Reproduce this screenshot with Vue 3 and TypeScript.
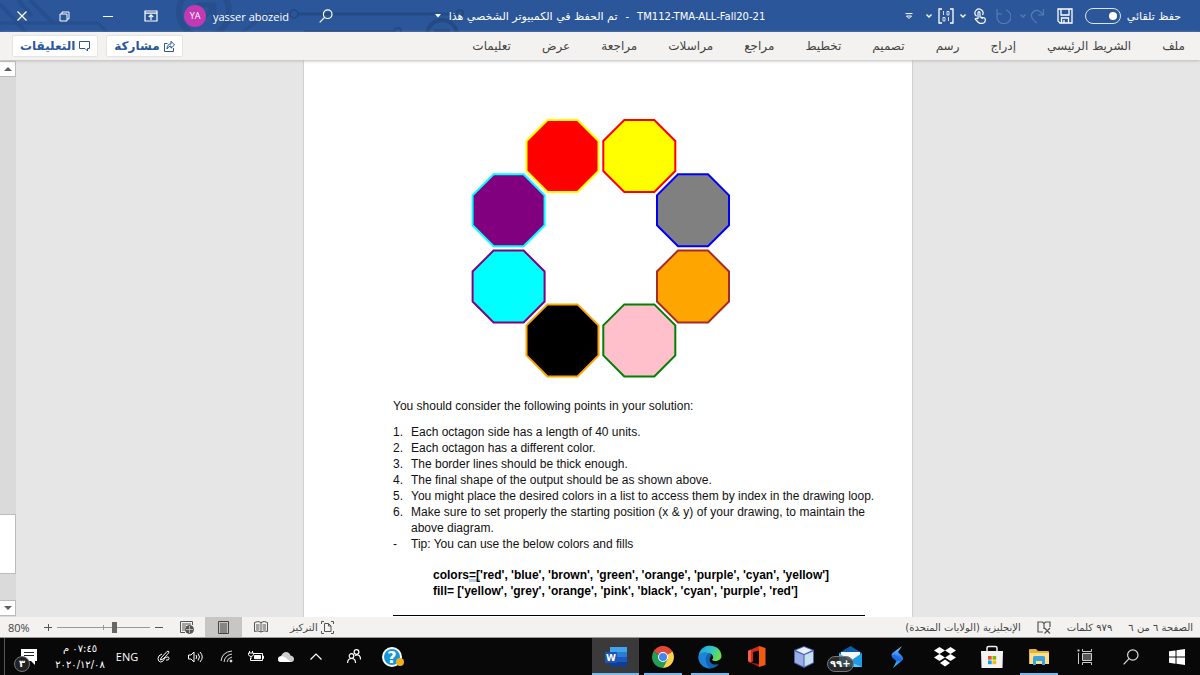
<script setup lang="ts">
import { ref } from 'vue'

interface Octagon {
  cx: number
  cy: number
  stroke: string
  fill: string
}

const tabs: string[] = [
  'ملف', 'الشريط الرئيسي', 'إدراج', 'رسم', 'تصميم', 'تخطيط',
  'مراجع', 'مراسلات', 'مراجعة', 'عرض', 'تعليمات',
]

const octagons: Octagon[] = [
  { cx: 168.3, cy: 38, stroke: 'red', fill: 'yellow' },
  { cx: 222, cy: 92.3, stroke: 'blue', fill: 'grey' },
  { cx: 222, cy: 168.5, stroke: 'brown', fill: 'orange' },
  { cx: 168.3, cy: 222.4, stroke: 'green', fill: 'pink' },
  { cx: 91.5, cy: 222.4, stroke: 'orange', fill: 'black' },
  { cx: 37.6, cy: 168.5, stroke: 'purple', fill: 'cyan' },
  { cx: 37.6, cy: 92.3, stroke: 'cyan', fill: 'purple' },
  { cx: 91.5, cy: 38, stroke: 'yellow', fill: 'red' },
]

function outline(o: Octagon): string {
  const r = 36
  const s = 15
  return [[-s, -r], [s, -r], [r, -s], [r, s], [s, r], [-s, r], [-r, s], [-r, -s]]
    .map(([x, y]) => `${o.cx + x},${o.cy + y}`)
    .join(' ')
}

const points: string[] = [
  'Each octagon side has a length of 40 units.',
  'Each octagon has a different color.',
  'The border lines should be thick enough.',
  'The final shape of the output should be as shown above.',
  'You might place the desired colors in a list to access them by index in the drawing loop.',
  'Make sure to set properly the starting position (x & y) of your drawing, to maintain the above diagram.',
]

const autosave = ref(true)
const zoom = ref(38)
</script>

<template>
  <div class="window" dir="rtl">
    <header class="titlebar">
      <svg class="circuit" width="500" height="32" viewBox="0 0 500 32" fill="none" stroke="#274f8e" stroke-width="4" aria-hidden="true">
        <path d="M0 4L26 32M18 0l14 16M30 0l24 24" />
        <path d="M0 23H98L107 32" stroke-width="3" />
        <circle cx="204" cy="12" r="25" stroke-width="6" />
        <path d="M196 5h18v16M198 24l16-18" stroke-width="5" />
        <path d="M240 34l22-17q4-3 9-3h18" stroke-width="3" />
        <g stroke="#234a83">
          <path d="M298 14h157" stroke-width="3" />
          <circle cx="294" cy="14" r="4" stroke-width="2" />
          <circle cx="460" cy="13" r="3" stroke-width="2" />
          <circle cx="442" cy="35" r="15" stroke-width="4" />
          <path d="M434 31h16" stroke-width="3" />
          <path d="M304 31h90" stroke-width="2" />
          <circle cx="398" cy="31" r="3" stroke-width="2" />
        </g>
      </svg>

      <div class="quick">
        <label class="autosave">
          <span>حفظ تلقائي</span>
          <input v-model="autosave" type="checkbox" role="switch" />
        </label>
        <button class="tool save" aria-label="حفظ">
          <svg width="16" height="16" viewBox="0 0 16 16" fill="none" stroke="#fff" stroke-width="1.3"><path d="M1 1h14v14H3l-2-2zM4 1v6h8V1M4.500 15v-5h7v5M7 12v3" /></svg>
        </button>
        <button class="tool redo dim" aria-label="إعادة">
          <svg width="15" height="16" viewBox="0 0 15 16" fill="none" stroke="#7394c6" stroke-width="1.2"><path d="M13.500 1v6H8M13 7C10 2 6 1 3 4s-2 7 4 11" /></svg>
        </button>
        <button class="tool chev dim" aria-label="خيارات الإعادة">
          <svg width="6" height="4" viewBox="0 0 6 4" fill="none" stroke="#7394c6" stroke-width="1.300"><path d="M.5.5L3 3 5.500.5" /></svg>
        </button>
        <button class="tool dim" aria-label="تراجع">
          <svg width="16" height="16" viewBox="0 0 16 16" fill="none" stroke="#7394c6" stroke-width="1.200"><path d="M2 1v5h5M11 2a7 7 0 1 1-8 3" /></svg>
        </button>
        <button class="tool touch" aria-label="وضع اللمس">
          <svg width="12" height="16" viewBox="0 0 12 16" fill="none" stroke="#fff" stroke-width="1.200"><path d="M2.500 8.200A4 4 0 1 1 8.500 7M4 11V5q0-1.300 1-1.300T6 5v4l4 .8q1.300.4 1.300 1.700 0 3.800-3 3.800H6Q4.500 15 1.200 11q1-1.500 2.800 0M8 9v2" /></svg>
        </button>
        <button class="tool chev" aria-label="خيارات اللمس">
          <svg width="6" height="4" viewBox="0 0 6 4" fill="none" stroke="#fff" stroke-width="1.300"><path d="M.5.5L3 3 5.500.5" /></svg>
        </button>
        <button class="tool macro" aria-label="وحدات الماكرو">
          <svg width="16" height="16" viewBox="0 0 16 16" fill="none" stroke="#fff" stroke-width="1.300"><path d="M4 1H1v14h3M12 1h3v14h-3" /><path d="M5.500 3v4M10.500 9v4M9 3.500h2V7H9zM5 9.500h2V13H5z" stroke-width=".8" /></svg>
        </button>
        <button class="tool chev" aria-label="خيارات الماكرو">
          <svg width="6" height="4" viewBox="0 0 6 4" fill="none" stroke="#fff" stroke-width="1.300"><path d="M.5.5L3 3 5.500.5" /></svg>
        </button>
        <button class="tool" aria-label="تخصيص شريط الأدوات">
          <svg width="8" height="7" viewBox="0 0 8 7" fill="none" stroke="#fff"><path d="M.5.6h7M1.500 3L4 5.500 6.500 3z" /></svg>
        </button>
      </div>

      <h1 class="title">
        <bdi>TM112-TMA-ALL-Fall20-21</bdi>
        <span>-</span>
        <span class="saved">تم الحفظ في الكمبيوتر الشخصي هذا</span>
        <svg width="6" height="4" viewBox="0 0 6 4" fill="#fff"><path d="M0 0h6L3 3.500z" /></svg>
      </h1>

      <div class="account">
        <button class="tool search" aria-label="بحث">
          <svg width="14" height="14" viewBox="0 0 14 14" fill="none" stroke="#fff" stroke-width="1.200"><circle cx="8.700" cy="5.200" r="4.300" /><path d="M5.600 8.400L.7 13.300" /></svg>
        </button>
        <button class="user"><bdi>yasser abozeid</bdi><span class="avatar">YA</span></button>
        <button class="sys" aria-label="خيارات عرض الشريط">
          <svg width="14" height="12" viewBox="0 0 14 12" fill="none" stroke="#fff" stroke-width="1.200"><path d="M1 1h12v10H1zM1 3.200h12M7 10V5M4.800 7L7 4.800 9.200 7" /></svg>
        </button>
        <button class="sys" aria-label="تصغير">
          <svg width="10" height="10" viewBox="0 0 10 10" stroke="#fff"><path d="M0 5.500h10" /></svg>
        </button>
        <button class="sys" aria-label="استعادة">
          <svg width="11" height="11" viewBox="0 0 11 11" fill="none" stroke="#fff"><path d="M1 3h7v7H1zM3 3V1h7v7H8" /></svg>
        </button>
        <button class="sys" aria-label="إغلاق">
          <svg width="10" height="10" viewBox="0 0 10 10" stroke="#fff" stroke-width="1.200"><path d="M.5.500l9 9M9.500.5l-9 9" /></svg>
        </button>
      </div>
    </header>

    <nav class="ribbon">
      <div class="tabs">
        <button v-for="tab in tabs" :key="tab" class="tab">{{ tab }}</button>
      </div>
      <div class="actions">
        <button class="action">
          <svg width="11" height="12" viewBox="0 0 11 12" fill="none" stroke="#2b579a"><path d="M3.500 3.500h-3v8h9V8M3 9q0-5 4-5V1.200L10.500 5 7 8.200V6Q4.500 6 3 9z" /></svg>
          <span>مشاركة</span>
        </button>
        <button class="action">
          <svg width="11" height="11" viewBox="0 0 11 11" fill="none" stroke="#2b579a"><path d="M.5.5h10v7H8.500v2.500L6 7.500H.5z" /></svg>
          <span>التعليقات</span>
        </button>
      </div>
    </nav>

    <main class="canvas">
      <div class="desk" dir="ltr">
        <article class="page">
          <svg class="ring" width="260" height="260" viewBox="0 0 260 260" role="img" aria-label="Ring of eight octagons">
            <polygon v-for="o in octagons" :key="o.fill" :points="outline(o)" :fill="o.fill" :stroke="o.stroke" stroke-width="2" />
          </svg>
          <p class="lead">You should consider the following points in your solution:</p>
          <ol class="points">
            <li v-for="(p, i) in points" :key="i" :class="{ single: i < 5 }"><span>{{ i + 1 }}.</span><span>{{ p }}</span></li>
            <li><span>-</span><span>Tip: You can use the below colors and fills</span></li>
          </ol>
          <p class="code">
            colors<span class="mark">=[</span>'red', 'blue', 'brown', 'green', 'orange', 'purple', 'cyan', 'yellow']<br />
            fill= ['yellow', 'grey', 'orange', 'pink', 'black', 'cyan', 'purple', 'red']
          </p>
          <hr />
        </article>
      </div>
      <div class="scroll">
        <button aria-label="للأعلى"><svg width="8" height="4" viewBox="0 0 8 4" fill="#606060"><path d="M0 4h8L4 0z" /></svg></button>
        <i class="above"></i>
        <i class="thumb"></i>
        <i class="below"></i>
        <button aria-label="للأسفل"><svg width="8" height="4" viewBox="0 0 8 4" fill="#606060"><path d="M0 0h8L4 4z" /></svg></button>
      </div>
    </main>

    <footer class="status">
      <div class="facts">
        <span>الصفحة ٦ من ٦</span>
        <span>٩٧٩ كلمات</span>
        <svg width="14" height="13" viewBox="0 0 14 13" fill="none" stroke="#555" stroke-width="1.200"><path d="M6 11H1V1h4.500L7 2.500V8M7 2.500L8.500 1H13v5M7.500 7l5.500 5.500M13 7l-5.500 5.500" /></svg>
        <span>الإنجليزية (الولايات المتحدة)</span>
      </div>
      <div class="views">
        <button class="focus">
          <svg width="13" height="13" viewBox="0 0 13 13" fill="none" stroke="#555"><path d="M3 .5H.5V3M10 .5h2.500V3M3 12.500H.5V10M10 12.500h2.500V10M3.500 2.500h4l2.500 2.500v5.500H3.500zM7.500 2.500V5H10" /></svg>
          <span>التركيز</span>
        </button>
        <button class="view" aria-label="وضع القراءة">
          <svg width="14" height="12" viewBox="0 0 14 12" fill="none" stroke="#555"><path d="M.5 1.500Q4-.5 7 1.500q3-2 6.500 0v9q-3.500-1.500-6.500.5-3-2-6.500-.5zM7 1.500V11M2 4h3.500M2 6h3.500M2 8h3.500M8.500 4H12M8.500 6H12M8.500 8H12" /></svg>
        </button>
        <button class="view active" aria-label="تخطيط الطباعة">
          <svg width="11" height="13" viewBox="0 0 11 13" fill="none" stroke="#444"><path d="M.5.5h10v12H.5zM2 3h7M2 5h7M2 7h7M2 9h7M2 11h7" /></svg>
        </button>
        <button class="view" aria-label="تخطيط ويب">
          <svg width="14" height="13" viewBox="0 0 14 13" fill="none" stroke="#555"><path d="M5 11.500H.5V.5h12V4M2 3h9M2 5h4M2 7h3M2 9h3" /><circle cx="9.500" cy="8.500" r="4" fill="#555" /><path d="M6 8.500h7M9.500 5v7" stroke="#ddd" stroke-width=".7" /></svg>
        </button>
        <div class="zoom">
          <button aria-label="تصغير العرض">
            <svg width="8" height="8" viewBox="0 0 8 8" stroke="#555"><path d="M0 4.500h8" /></svg>
          </button>
          <input v-model.number="zoom" type="range" min="0" max="100" aria-label="مستوى التكبير" />
          <button aria-label="تكبير العرض">
            <svg width="8" height="8" viewBox="0 0 8 8" stroke="#555"><path d="M0 4.500h8M4.500 1v7" /></svg>
          </button>
        </div>
        <button class="percent"><bdi>80%</bdi></button>
      </div>
    </footer>

    <div class="taskbar">
      <div class="apps">
        <button class="sysapp" aria-label="ابدأ">
          <svg width="16" height="16" viewBox="0 0 16 16" fill="#fff"><path d="M0 2.300L6.500 1.400V7.500H0zM7.500 1.200L16 0v7.500H7.500zM0 8.500h6.500v6.200L0 13.800zM7.500 8.500H16V16l-8.500-1.200z" /></svg>
        </button>
        <button class="sysapp" aria-label="بحث">
          <svg width="16" height="16" viewBox="0 0 16 16" fill="none" stroke="#ddd" stroke-width="1.200"><circle cx="9.800" cy="6" r="5.200" /><path d="M6 9.700L.6 15.400" /></svg>
        </button>
        <button class="sysapp" aria-label="عرض المهام">
          <svg width="16" height="16" viewBox="0 0 16 16" fill="none" stroke="#ccc"><path d="M5.500 4.500h9v7h-9z" fill="#555" /><path d="M5.500 0v2.500h9V0M5.500 16v-2.500h9V16M1.500 4v11" /><path d="M.5 1.500h2" stroke-width="2" /></svg>
        </button>
        <button class="app open" aria-label="مستكشف الملفات">
          <svg width="20" height="18" viewBox="0 0 20 18"><path d="M0 2q0-1 1-1h6l2 2h10q1 0 1 1v12H0z" fill="#e8b23a" /><path d="M1 5h19v11H1z" fill="#ffe08a" /><path d="M4 17V9.500Q4 8 5.500 8h9Q16 8 16 9.500V17h-3v-4H7v4z" fill="#3ba3e0" /></svg>
        </button>
        <button class="app" aria-label="المتجر">
          <svg width="22" height="24" viewBox="0 0 22 24"><path d="M6 7V3q0-1.500 1.500-1.500h7Q16 1.500 16 3v4" fill="none" stroke="#eee" stroke-width="1.500" /><path d="M0 6h22l-.5 17H.5z" fill="#f3f3f3" /><path d="M7 11h3.700v3.700H7z" fill="#f25022" /><path d="M11.500 11h3.700v3.700h-3.700z" fill="#7fba00" /><path d="M7 15.500h3.700v3.700H7z" fill="#00a4ef" /><path d="M11.500 15.500h3.700v3.700h-3.700z" fill="#ffb900" /></svg>
        </button>
        <button class="app" aria-label="Dropbox">
          <svg width="22" height="20" viewBox="0 0 22 20" fill="#fff"><path d="M5.500 0L11 3.500 5.500 7 0 3.500zM16.500 0L22 3.500 16.500 7 11 3.500zM5.500 7L11 10.500 5.500 14 0 10.500zM16.500 7L22 10.500 16.500 14 11 10.500zM11 12.500l5 3.500-5 3.500L6 16z" /></svg>
        </button>
        <button class="app" aria-label="مساعد">
          <svg width="13" height="22" viewBox="0 0 13 22"><defs><linearGradient id="bolt" x1="0" y1="0" x2="0" y2="1"><stop offset="0" stop-color="#7fd6ff" /><stop offset=".5" stop-color="#2878f0" /><stop offset="1" stop-color="#40c8f8" /></linearGradient></defs><path d="M11 0L1.500 7q-2 2 0 4.500l4 3.500L2 22l9-7.500q2-2 0-4.500L7 6z" fill="url(#bolt)" /><path d="M1 9.500q2-1.500 4 0l6.500 4-1.500 2-4.500-.5-4-3.500q-.5-1-.5-2z" fill="#1c6be8" /></svg>
        </button>
        <button class="app" aria-label="البريد">
          <span class="mail">
            <svg width="23" height="21" viewBox="0 0 23 21"><path d="M0 7L11.500 0 23 7v14H0z" fill="#0b5ea8" /><path d="M2 6h19v9H2z" fill="#f4f8fc" /><path d="M0 7l11.500 8L0 21z" fill="#40bdf0" /><path d="M23 7L9 16.500l9 4.500h5z" fill="#1f9be6" /><path d="M0 21l9-6 14 6z" fill="#50d0fa" /></svg>
            <b class="count">+٩٩</b>
          </span>
        </button>
        <button class="app" aria-label="VirtualBox">
          <svg width="20" height="22" viewBox="0 0 20 22"><path d="M10 0l10 4v13l-10 5L0 17V4z" fill="#4963b5" /><path d="M10 1l8 3.300L10 8 2 4.300z" fill="#e7effb" /><path d="M1 5.500L9.500 9v11.500L1 16.500z" fill="#9caee5" /><path d="M10.500 9L19 5.500v11l-8.500 4z" fill="#c6e0ee" /></svg>
        </button>
        <button class="app" aria-label="Office">
          <svg width="18" height="21" viewBox="0 0 18 21"><path d="M11 0l6.500 2v17L11 21z" fill="#f25a12" /><path d="M11 0v4.500L5 6v9.500L2.500 17 0 15.500V5z" fill="#d42a1e" /><path d="M2 16.500L11 18v3z" fill="#a7151b" /><path d="M0 5l3-1.500V16L0 15z" fill="#ef604d" /></svg>
        </button>
        <button class="app open" aria-label="Edge">
          <svg width="24" height="24" viewBox="0 0 24 24"><defs><linearGradient id="sea" x1="0" y1="0" x2="1" y2=".3"><stop offset="0" stop-color="#1b9de2" /><stop offset=".6" stop-color="#34c6c4" /><stop offset="1" stop-color="#66e04b" /></linearGradient></defs><path d="M12 .5a11.500 11.500 0 1 0 9 18.500q-7 2-9-2.500-1-3 1-5.500z" fill="#1261b3" /><path d="M1 10C3-3 23-2 23.500 11c0 5-7 6-9.500 4 3-3 0-7-4-7-4 0-8 1-9 4z" fill="url(#sea)" /><path d="M.5 12C1 7 9 6 11 9c-4 0-5 9 1 14.500C5 23 .5 18 .5 12z" fill="#1c83d6" /></svg>
        </button>
        <button class="app open" aria-label="Chrome">
          <svg width="22" height="22" viewBox="0 0 22 22"><path d="M11 11L1.500 5.500a11 11 0 0 1 19 0z" fill="#e2483a" /><path d="M11 11L1.500 5.500a11 11 0 0 0 9.500 16.500l4.500-8z" fill="#249d58" /><path d="M11 11l9.500-5.500A11 11 0 0 1 11 22l4.500-8.500z" fill="#fdd149" /><path d="M11 6h9.700l-.2-.5H11z" fill="#e2483a" /><circle cx="11" cy="11" r="5" fill="#fff" /><circle cx="11" cy="11" r="4" fill="#4485f2" /></svg>
        </button>
        <button class="app open current" aria-label="Word">
          <svg width="22" height="20" viewBox="0 0 22 20" direction="ltr"><path d="M5 0h17v5H5z" fill="#41a5ee" /><path d="M5 5h17v5H5z" fill="#2b7cd3" /><path d="M5 10h17v5H5z" fill="#185abd" /><path d="M5 15h17v5H5z" fill="#103f91" /><path d="M0 5h12v11H0z" fill="#1b55b5" /><text x="6" y="14" fill="#fff" font-size="9" font-weight="700" text-anchor="middle">W</text></svg>
        </button>
      </div>

      <div class="tray">
        <button class="t32" aria-label="مساعدة">
          <svg width="22" height="22" viewBox="0 0 22 22" direction="ltr"><circle cx="10" cy="11" r="9" fill="#1596d8" stroke="#fff" stroke-width="2" /><text x="10" y="17" fill="#fff" font-size="16" font-weight="700" text-anchor="middle">?</text><circle cx="18" cy="16" r="4" fill="#f2ae1c" /></svg>
        </button>
        <button class="t46" aria-label="الأشخاص">
          <svg width="14" height="15" viewBox="0 0 14 15" fill="none" stroke="#fff" stroke-width="1.200"><circle cx="4.500" cy="7" r="2.300" /><path d="M.6 14q0-4.500 4-4.500T8.500 14" /><circle cx="9.500" cy="3" r="2.400" /><path d="M8 6.500q5.500-2 5.500 4" /></svg>
        </button>
        <button class="t30" aria-label="الرموز المخفية">
          <svg width="12" height="7" viewBox="0 0 12 7" fill="none" stroke="#fff" stroke-width="1.200"><path d="M.5 6.500L6 1l5.500 5.500" /></svg>
        </button>
        <button class="t30" aria-label="OneDrive">
          <svg width="16" height="10" viewBox="0 0 16 10"><path d="M3 10Q0 10 0 7q0-2.500 3-3Q5 0 8 0q3.500 0 4.500 3.500Q16 4 16 7q0 3-3 3z" fill="#ccc" /><path d="M1 5q4-2 7 1l5 4H3Q0 10 0 7z" fill="#fff" /></svg>
        </button>
        <button class="t30" aria-label="البطارية">
          <svg width="16" height="12" viewBox="0 0 16 12" fill="none" stroke="#fff"><path d="M5 2.500h9.500v7H2.500V7M14.500 5h1v2.500h-1M1.500 0v2M4.500 0v2M.5 2h5v1.500Q5 5.500 3 5.500T.5 3.500zM3 5.500V8" /><path d="M6.500 4.500h6v3.200h-6z" fill="#fff" /></svg>
        </button>
        <button class="t30" aria-label="الشبكة">
          <svg width="13" height="13" viewBox="0 0 13 13" fill="none" stroke="#ddd"><path d="M1 11Q2 2 12 1M4 12q1-7 8-8M7 12q.5-4 5-5" /><circle cx="11" cy="11" r="1" fill="#fff" /></svg>
        </button>
        <button class="t32" aria-label="الصوت">
          <svg width="15" height="12" viewBox="0 0 15 12" fill="none" stroke="#fff"><path d="M.5 4h2.500l3-3v10L3 8H.500zM8 4q1.500 2 0 4M10 2.500q3 3.500 0 7M12 1q4.500 5 0 10" /></svg>
        </button>
        <button class="t32" aria-label="القلم">
          <svg width="13" height="13" viewBox="0 0 13 13" fill="none" stroke="#fff"><path d="M4 8L10 1.500q1.500-1 2 .5 0 1-6 7L3.500 10zM5 4Q1 5.500 1 8.500T3.500 12Q6 12 7 9.500T10 7q2-.5 2 1.500T9 10" /></svg>
        </button>
        <button class="lang" dir="ltr">ENG</button>
        <button class="clock"><span>٠٧:٤٥ م</span><span>٢٠٢٠/١٢/٠٨</span></button>
        <button class="notify" aria-label="الإشعارات">
          <span class="bubble">
            <svg width="16" height="16" viewBox="0 0 16 16"><path d="M0 0h16v12h-2v4l-4-4H0z" fill="#fff" /><path d="M3 3.500h10M3 6.500h10" stroke="#222" /></svg>
            <b class="badge">٣</b>
          </span>
        </button>
        <i class="peek"></i>
      </div>
    </div>
  </div>
</template>

<style>
body {
  margin: 0;
}
</style>

<style scoped>
.window {
  display: flex;
  flex-direction: column;
  height: 100vh;
  overflow: hidden;
  font-family: "DejaVu Sans", sans-serif;
  font-size: 11px;
  color: #444;
}
button {
  display: flex;
  align-items: center;
  justify-content: center;
  padding: 0;
  border: 0;
  background: none;
  font: inherit;
  color: inherit;
  white-space: nowrap;
}
svg {
  display: block;
  flex: none;
}

.titlebar {
  position: relative;
  display: grid;
  grid-template-columns: 1fr auto 1fr;
  align-items: center;
  flex: none;
  height: 32px;
  background: #2b579a;
  color: #fff;
}
.circuit {
  position: absolute;
  left: 0;
  top: 0;
}
.quick,
.account,
.title {
  position: relative;
  display: flex;
  align-items: center;
}
.quick {
  padding-right: 19px;
}
.autosave {
  display: flex;
  align-items: center;
  gap: 6px;
  font-size: 11px;
  white-space: nowrap;
}
.autosave input {
  appearance: none;
  display: flex;
  align-items: center;
  justify-content: flex-start;
  box-sizing: border-box;
  width: 36px;
  height: 16px;
  margin: 0;
  padding: 0 3px;
  border: 1px solid #dbe4f2;
  border-radius: 8px;
}
.autosave input::before {
  content: "";
  width: 8px;
  height: 8px;
  border-radius: 50%;
  background: #fff;
}
.autosave input:not(:checked) {
  justify-content: flex-end;
}
.tool {
  width: 26px;
  height: 28px;
}
.dim {
  opacity: 0.6;
}
.save {
  width: 39px;
}
.redo {
  width: 16px;
}
.chev {
  width: 14px;
}
.touch,
.macro {
  width: 20px;
}
.title {
  gap: 8px;
  margin: 0;
  font-size: 10px;
  font-weight: 400;
  white-space: nowrap;
}
.saved {
  font-size: 11px;
}
.account {
  justify-content: flex-end;
}
.search {
  margin-left: 24px;
}
.user {
  gap: 7px;
  margin-left: 12px;
  font-family: "Open Sans", sans-serif;
  font-size: 11px;
}
.avatar {
  width: 22px;
  border-radius: 50%;
  background: #c239b3;
  font-size: 9px;
  line-height: 22px;
  text-align: center;
}
.sys {
  width: 43px;
  height: 32px;
}

.ribbon {
  position: relative;
  z-index: 1;
  display: flex;
  justify-content: space-between;
  align-items: center;
  flex: none;
  height: 28px;
  padding: 0 15px 0 12px;
  background: #f3f2f1;
  box-shadow: 0 1px 3px #bbb;
  font-size: 12px;
}
.tabs {
  display: flex;
  gap: 31px;
}
.actions {
  display: flex;
  gap: 8px;
}
.action {
  gap: 4px;
  box-sizing: border-box;
  height: 22px;
  padding: 0 7px;
  border: 1px solid #e6e4e2;
  border-radius: 2px;
  background: #fff;
  color: #2b579a;
  font-weight: 700;
}

.canvas {
  display: flex;
  flex: 1;
  min-height: 0;
  background: #e6e6e6;
}
.desk {
  display: flex;
  justify-content: center;
  flex: 1;
  overflow: hidden;
}
.page {
  box-sizing: border-box;
  width: 610px;
  padding: 58px 47px 0 89px;
  border: solid #d0d0d0;
  border-width: 0 1px;
  background: #fff;
  color: #111;
  font-family: "Liberation Sans", Arial, sans-serif;
  font-size: 12px;
  line-height: 16px;
}
.ring {
  margin-left: 78px;
}
.lead {
  margin: 20px 0 10px;
}
.points {
  margin: 0;
  padding: 0;
  list-style: none;
  text-align: justify;
}
.points li {
  display: grid;
  grid-template-columns: 18px 1fr;
}
.points .single {
  white-space: nowrap;
}
.code {
  margin: 15px 0 16px;
  padding-left: 40px;
  color: #000;
  font-weight: 700;
  white-space: nowrap;
}
.mark {
  background: linear-gradient(#b5cdf3, #b5cdf3) bottom / 100% 3px no-repeat;
}
hr {
  margin: 0;
  border: 0;
  border-top: 1px solid #000;
}
.scroll {
  display: flex;
  flex-direction: column;
  flex: none;
  width: 16px;
  padding: 1px 0;
  background: #dadada;
}
.scroll button,
.thumb {
  box-sizing: border-box;
  flex: none;
  height: 16px;
  border: 1px solid #bbb;
  border-left: 0;
  background: #fff;
}
.scroll .thumb {
  height: 60px;
}
.above {
  flex: 437;
}
.below {
  flex: 26;
}

.status {
  display: flex;
  justify-content: space-between;
  align-items: stretch;
  flex: none;
  box-sizing: border-box;
  height: 21px;
  padding: 0 7px 0 8px;
  border-bottom: 1px solid #999;
  background: #f3f2f1;
  font-size: 10px;
}
.facts,
.views,
.zoom {
  display: flex;
  align-items: center;
}
.facts {
  gap: 16px;
}
.views {
  align-items: stretch;
}
.focus {
  gap: 3px;
  margin-left: 11px;
}
.view {
  width: 37px;
}
.active {
  background: #c8c6c4;
}
.zoom button {
  width: 18px;
  height: 20px;
}
.zoom input {
  appearance: none;
  width: 93px;
  height: 11px;
  margin: 0;
  background:
    linear-gradient(#999, #999) 46px center / 1px 5px no-repeat,
    linear-gradient(#999, #999) center / 100% 1px no-repeat;
}
.zoom input::-webkit-slider-thumb {
  appearance: none;
  width: 5px;
  height: 11px;
  background: #666;
}
.percent {
  width: 31px;
  justify-content: flex-end;
  font-family: "Open Sans", sans-serif;
  font-size: 11px;
}

.taskbar {
  display: flex;
  justify-content: space-between;
  flex: none;
  height: 37px;
  background: #080808;
  color: #fff;
}
.apps,
.tray {
  display: flex;
}
.sysapp {
  width: 46px;
}
.app {
  width: 47px;
}
.open {
  background: linear-gradient(#76b9ed, #76b9ed) center bottom / 38px 2px no-repeat;
}
.current {
  background: linear-gradient(#76b9ed, #76b9ed) center bottom / 100% 2px no-repeat #3a3a3a;
}
.mail,
.bubble {
  position: relative;
}
.count {
  position: absolute;
  left: -12px;
  top: 10px;
  padding: 0 2px;
  border: 1px solid #777;
  border-radius: 9px;
  background: #333c;
  font-size: 10px;
  line-height: 14px;
}
.t30 {
  width: 30px;
}
.t32 {
  width: 32px;
}
.t46 {
  width: 46px;
}
.lang {
  width: 40px;
  font-family: "Open Sans", sans-serif;
}
.clock {
  flex-direction: column;
  width: 54px;
  font-size: 10px;
  line-height: 16px;
}
.notify {
  width: 48px;
}
.badge {
  position: absolute;
  left: -7px;
  top: 7px;
  width: 14px;
  border: 1px solid #777;
  border-radius: 50%;
  background: #222;
  font-size: 10px;
  line-height: 14px;
}
.peek {
  width: 4px;
  border-right: 1px solid #555;
}
</style>
